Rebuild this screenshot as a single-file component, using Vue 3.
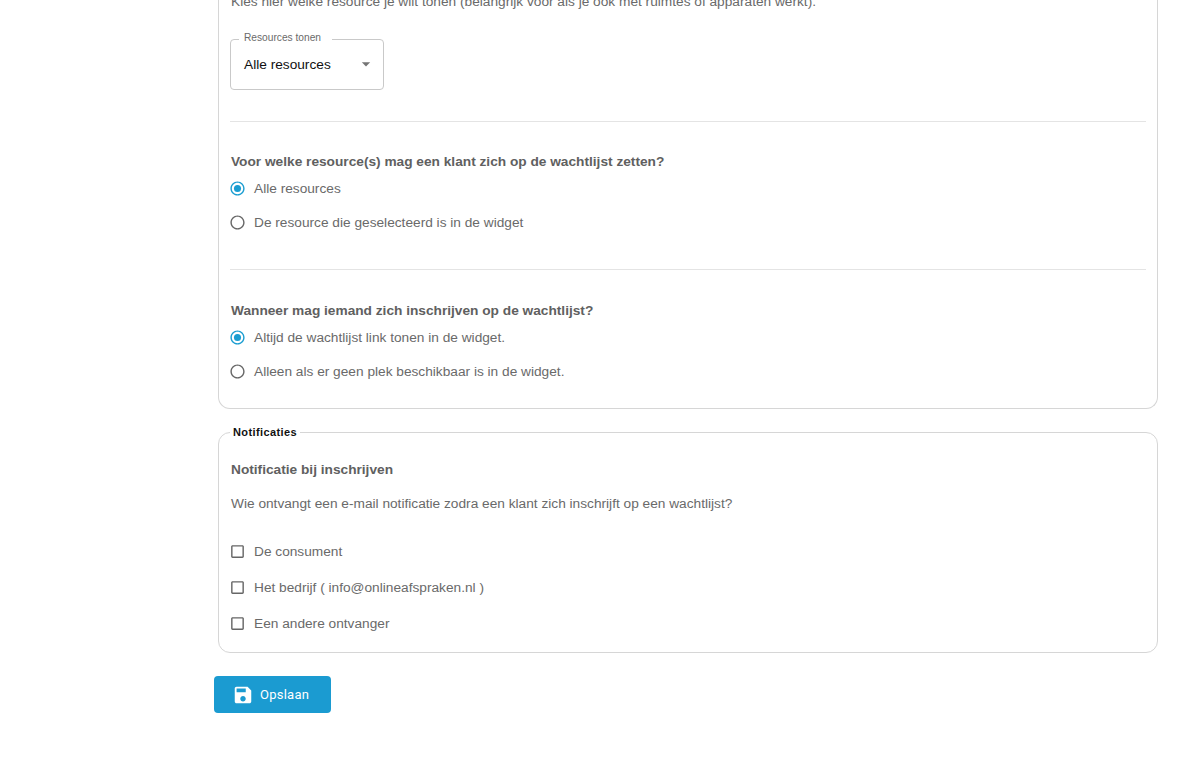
<script setup>
const resourceOptions = ['Alle resources', 'De resource die geselecteerd is in de widget']
const whenOptions = ['Altijd de wachtlijst link tonen in de widget.', 'Alleen als er geen plek beschikbaar is in de widget.']
const receivers = ['De consument', 'Het bedrijf ( info@onlineafspraken.nl )', 'Een andere ontvanger']
</script>

<template>
  <div class="page">
    <fieldset class="card first">
      <p class="intro">Kies hier welke resource je wilt tonen (belangrijk voor als je ook met ruimtes of apparaten werkt).</p>
      <fieldset class="select">
        <legend><span>Resources tonen</span></legend>
        <div class="select_row">
          <span>Alle resources</span>
          <svg class="caret" viewBox="0 0 24 24"><path d="M7 10l5 5 5-5z" /></svg>
        </div>
      </fieldset>
      <div class="divider divider_one"></div>
      <div class="question q_one">Voor welke resource(s) mag een klant zich op de wachtlijst zetten?</div>
      <div class="options">
        <div v-for="(option, i) in resourceOptions" :key="option" class="option">
          <svg class="icon" :class="{ active: i === 0 }" viewBox="0 0 24 24">
            <path d="M12 2C6.48 2 2 6.48 2 12s4.48 10 10 10 10-4.48 10-10S17.52 2 12 2zm0 18c-4.42 0-8-3.58-8-8s3.58-8 8-8 8 3.58 8 8-3.58 8-8 8z" />
            <circle v-if="i === 0" cx="12" cy="12" r="5" />
          </svg>
          <span>{{ option }}</span>
        </div>
      </div>
      <div class="divider divider_two"></div>
      <div class="question q_two">Wanneer mag iemand zich inschrijven op de wachtlijst?</div>
      <div class="options">
        <div v-for="(option, i) in whenOptions" :key="option" class="option">
          <svg class="icon" :class="{ active: i === 0 }" viewBox="0 0 24 24">
            <path d="M12 2C6.48 2 2 6.48 2 12s4.48 10 10 10 10-4.48 10-10S17.52 2 12 2zm0 18c-4.42 0-8-3.58-8-8s3.58-8 8-8 8 3.58 8 8-3.58 8-8 8z" />
            <circle v-if="i === 0" cx="12" cy="12" r="5" />
          </svg>
          <span>{{ option }}</span>
        </div>
      </div>
    </fieldset>

    <fieldset class="card second">
      <legend>Notificaties</legend>
      <div class="question plain">Notificatie bij inschrijven</div>
      <p class="ask">Wie ontvangt een e-mail notificatie zodra een klant zich inschrijft op een wachtlijst?</p>
      <div class="checks">
        <div v-for="receiver in receivers" :key="receiver" class="option check">
          <svg class="icon" viewBox="0 0 24 24">
            <path d="M19 5v14H5V5h14m0-2H5c-1.1 0-2 .9-2 2v14c0 1.1.9 2 2 2h14c1.1 0 2-.9 2-2V5c0-1.1-.9-2-2-2z" />
          </svg>
          <span>{{ receiver }}</span>
        </div>
      </div>
    </fieldset>

    <button class="save" type="button">
      <svg viewBox="0 0 24 24"><path d="M17 3H5c-1.11 0-2 .9-2 2v14c0 1.1.89 2 2 2h14c1.1 0 2-.9 2-2V7l-4-4zm-5 16c-1.66 0-3-1.34-3-3s1.34-3 3-3 3 1.34 3 3-1.34 3-3 3zm3-10H5V5h10v4z" /></svg>
      <span>Opslaan</span>
    </button>
  </div>
</template>

<style scoped>
.page {
  width: 940px;
  height: 776px;
  box-sizing: border-box;
  margin-left: 218px;
  font-family: "Liberation Sans", Arial, sans-serif;
  font-size: 13.7px;
  color: #6a6a6a;
}
fieldset {
  margin: 0;
  min-width: 0;
}
.card {
  box-sizing: border-box;
  border: 1px solid #d6d6d6;
  border-radius: 12px;
  padding: 0 11px 0 12px;
}
.first {
  height: 409px;
  border-top: none;
  border-top-left-radius: 0;
  border-top-right-radius: 0;
}
.intro {
  box-sizing: border-box;
  height: 47px;
  margin: -8px 0 0;
  padding-top: 1px;
  line-height: 18px;
}
.select {
  box-sizing: border-box;
  width: 154px;
  height: 56px;
  margin: -5px 0 0 -1px;
  border: 1px solid #c9c9c9;
  border-radius: 4px;
  padding: 0 8px 0 13px;
}
.select legend {
  padding: 0 11px 0 5px;
  margin-left: -5px;
  font-size: 10.2px;
  line-height: 10px;
  color: #6a6a6a;
}
.select legend span {
  position: relative;
  top: -1px;
}
.select_row {
  display: flex;
  align-items: center;
  justify-content: space-between;
  height: 40px;
  color: #111;
  font-size: 13.7px;
}
.caret {
  width: 20px;
  height: 20px;
  fill: #757575;
  margin-right: -1px;
}
.divider {
  height: 1px;
  background: #e4e4e4;
  margin-left: -1px;
}
.divider_one {
  margin-top: 31px;
}
.divider_two {
  margin-top: 37px;
}
.question {
  font-weight: 700;
  line-height: 18px;
  color: #606060;
}
.q_one {
  margin-top: 31px;
}
.q_two {
  margin-top: 32px;
}
.options {
  display: flex;
  flex-direction: column;
  gap: 14px;
  margin-top: 7px;
}
.option {
  display: flex;
  align-items: center;
  gap: 8px;
  height: 20px;
  margin-left: -2px;
}
.icon {
  width: 17px;
  height: 17px;
  fill: #666;
  flex-shrink: 0;
}
.icon.active {
  fill: #1a9dd1;
}
.second {
  margin-top: 16px;
  height: 228px;
}
.second legend {
  padding: 0 3px;
  margin-left: -1px;
  font-size: 11px;
  font-weight: 700;
  line-height: 14px;
  letter-spacing: .4px;
  color: #111;
}
.plain {
  margin-top: 22px;
}
.ask {
  margin: 16px 0 0;
  line-height: 18px;
}
.checks {
  display: flex;
  flex-direction: column;
  gap: 15.75px;
  margin-top: 28.5px;
}
.save {
  display: flex;
  align-items: center;
  gap: 6px;
  box-sizing: border-box;
  width: 117px;
  height: 37px;
  margin: 23px 0 0 -4px;
  padding: 0 0 0 18px;
  border: none;
  border-radius: 4px;
  background: #1b9bd1;
  color: #fff;
  font-family: Roboto, "Liberation Sans", sans-serif;
  font-size: 13px;
  font-weight: 400;
  letter-spacing: .25px;
  cursor: pointer;
}
.save svg {
  width: 22px;
  height: 22px;
  fill: #fff;
}
</style>

<style>
html, body {
  margin: 0;
  background: #fff;
  overflow: hidden;
}
</style>
